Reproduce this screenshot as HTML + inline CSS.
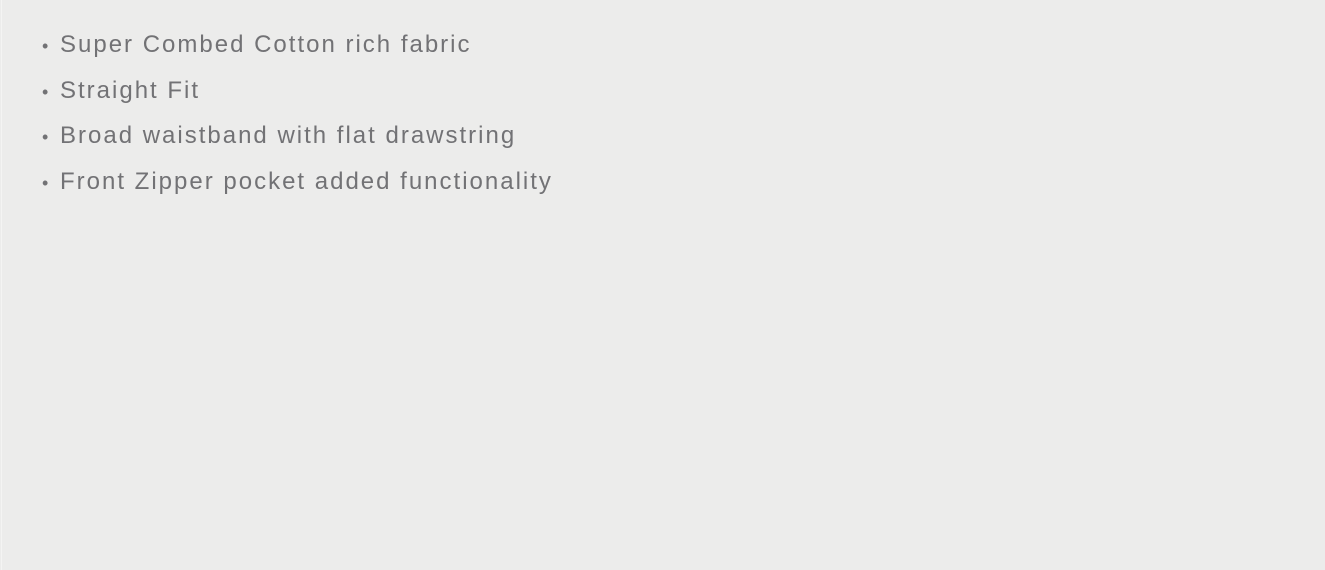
<!DOCTYPE html>
<html><head><meta charset="utf-8"><style>
html,body{margin:0;padding:0;width:1325px;height:570px;overflow:hidden;background:#ececeb;}
.box{position:absolute;left:1px;top:0;width:1324px;height:570px;background:#ececeb;border-left:1px solid #f4f4f3;}
ul{position:absolute;left:42px;top:29px;margin:0;padding:0;list-style:none;font-family:"Liberation Sans",sans-serif;font-size:24px;color:#727275;letter-spacing:2px;}
li{height:45.5px;line-height:32px;white-space:nowrap;}
li span{display:inline-block;width:18px;letter-spacing:0;font-size:18px;}
</style></head><body><div class="box"></div>
<ul>
<li><span>•</span>Super Combed Cotton rich fabric</li>
<li><span>•</span>Straight Fit</li>
<li><span>•</span>Broad waistband with flat drawstring</li>
<li><span>•</span>Front Zipper pocket added functionality</li>
</ul>
</body></html>
